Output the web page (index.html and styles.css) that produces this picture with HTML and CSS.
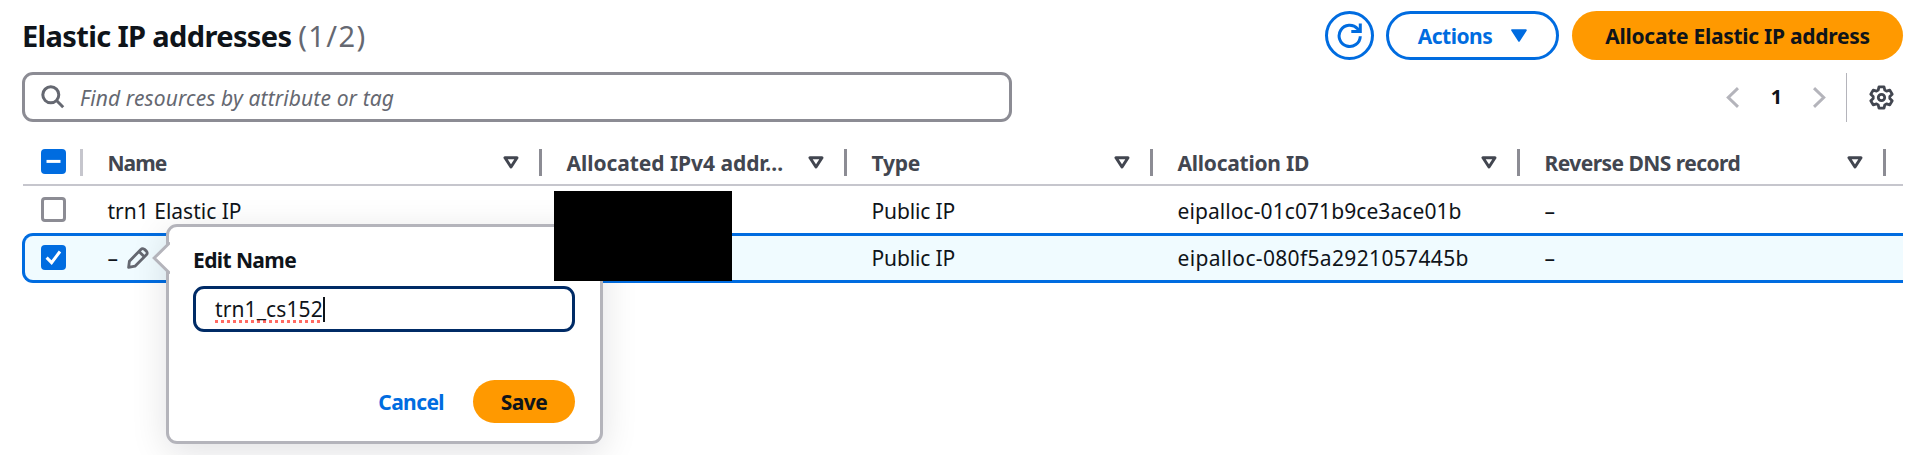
FILE: index.html
```html
<!DOCTYPE html>
<html lang="en">
<head><meta charset="utf-8"><title>Elastic IP addresses</title><link rel="stylesheet" href="styles.css"></head>
<body>
<main class="panel">
  <header class="header">
    <h1 class="title">Elastic IP addresses <span class="count">(1/2)</span></h1>
    <div class="actions">
      <button class="btn btn-icon" aria-label="Refresh"><svg width="27" height="27" viewBox="0 0 27 27" fill="none" stroke="currentColor" stroke-width="3"><path d="M24.3 14.2A10.6 10.6 0 1 1 21.6 6.8l2 2.2"/><path d="M24.3 1.5v8h-9"/></svg></button>
      <button class="btn btn-normal">Actions<svg width="16" height="13" viewBox="0 0 16 13" fill="currentColor" stroke="currentColor" stroke-width="2" stroke-linejoin="round"><path d="M1.2 1.2h13.6L8 11.8z"/></svg></button>
      <button class="btn btn-primary">Allocate Elastic IP address</button>
    </div>
  </header>
  <div class="tools">
    <div class="search">
      <svg width="24" height="24" viewBox="0 0 24 24" fill="none" stroke="#656871" stroke-width="3"><circle cx="9.8" cy="9.8" r="8"/><path d="M15.3 15.3l6.9 6.9"/></svg>
      <span class="placeholder">Find resources by attribute or tag</span>
    </div>
    <div class="pager">
      <svg width="13" height="21" viewBox="0 0 13 21" fill="none" stroke="#b4b4bb" stroke-width="3"><path d="M12 1.2L2.3 10.5 12 19.8"/></svg>
      <b class="page">1</b>
      <svg width="13" height="21" viewBox="0 0 13 21" fill="none" stroke="#b4b4bb" stroke-width="3"><path d="M1 1.2l9.7 9.3L1 19.8"/></svg>
      <span class="rule"></span>
      <svg width="25" height="25" viewBox="0 0 25 25" fill="none" stroke="#424650" stroke-width="2.8" stroke-linejoin="round"><path d="M10 1.8h5l.8 3.3 1.7 1 3.3-1 2.4 4.2-2.4 2.3v1.8l2.4 2.3-2.4 4.2-3.3-1-1.7 1-.8 3.3h-5l-.8-3.3-1.7-1-3.3 1-2.4-4.2 2.4-2.3v-1.8L1.8 9.3l2.4-4.2 3.3 1 1.7-1z"/><circle cx="12.5" cy="12.5" r="3.2"/></svg>
    </div>
  </div>
  <section class="table">
    <div class="row head">
      <div class="cell check light"><span class="box on"><svg width="25" height="25" viewBox="0 0 25 25"><path d="M5.5 12.4h14" stroke="#fff" stroke-width="3"/></svg></span></div>
      <div class="cell"><span class="h-name">Name</span><svg class="sort" width="16" height="13" viewBox="0 0 16 13"><path d="M2 1.8h12L8 11z"/></svg></div>
      <div class="cell"><span class="h-ip">Allocated IPv4 addr…</span><svg class="sort" width="16" height="13" viewBox="0 0 16 13"><path d="M2 1.8h12L8 11z"/></svg></div>
      <div class="cell"><span class="h-type">Type</span><svg class="sort" width="16" height="13" viewBox="0 0 16 13"><path d="M2 1.8h12L8 11z"/></svg></div>
      <div class="cell"><span class="h-id">Allocation ID</span><svg class="sort" width="16" height="13" viewBox="0 0 16 13"><path d="M2 1.8h12L8 11z"/></svg></div>
      <div class="cell"><span class="h-dns">Reverse DNS record</span><svg class="sort" width="16" height="13" viewBox="0 0 16 13"><path d="M2 1.8h12L8 11z"/></svg></div>
    </div>
    <div class="row first">
      <div class="cell check"><span class="box"></span></div>
      <div class="cell">trn1 Elastic IP</div>
      <div class="cell"></div>
      <div class="cell type">Public IP</div>
      <div class="cell id-a">eipalloc-01c071b9ce3ace01b</div>
      <div class="cell">–</div>
    </div>
    <div class="row selected">
      <div class="cell check"><span class="box on"><svg width="25" height="25" viewBox="0 0 25 25"><path d="M5.6 12.6l5 5L19 6.5" fill="none" stroke="#fff" stroke-width="3"/></svg></span></div>
      <div class="cell edit">–<svg width="22" height="22" viewBox="0 0 22 22" fill="none" stroke="#656871" stroke-width="2.8" stroke-linejoin="round"><path d="M1.6 20.4l.8-6.2L13.6 2.7q1.7-1.7 3.6-.6l2.2 2q1.6 1.9 0 3.7L8 19.2z"/><path d="M12 4.6l5.4 5.2"/></svg>
        <div class="popover">
          <svg class="arrow" width="18" height="32" viewBox="0 0 18 32"><path d="M18 .5L2.2 16 18 31.5" fill="#fff" stroke="#b4b4bb" stroke-width="3"/></svg>
          <label class="label">Edit Name</label>
          <div class="input"><span class="value">trn1_cs152</span><span class="caret"></span></div>
          <div class="foot"><button class="link">Cancel</button><button class="save">Save</button></div>
        </div>
      </div>
      <div class="cell"><span class="redaction"></span></div>
      <div class="cell type">Public IP</div>
      <div class="cell id-b">eipalloc-080f5a2921057445b</div>
      <div class="cell">–</div>
    </div>
  </section>
</main>
</body>
</html>
```
FILE: styles.css
```css
* { box-sizing: border-box; }
body { margin: 0; height: 455px; overflow: hidden; background: #fff; color: #0f141a; font: 21px/28px "Noto Sans", "Open Sans", sans-serif; }
svg { display: block; flex: none; }
button { font: inherit; color: inherit; border: 0; padding: 0; background: none; white-space: nowrap; }
.panel { padding: 11px 17px 0 22px; }
.header { display: flex; justify-content: space-between; height: 49px; }
.title { margin: 0; padding-top: 1px; font-size: 29px; line-height: 48px; font-weight: 700; letter-spacing: -.64px; }
.count { color: #656871; font-weight: 400; letter-spacing: 1.4px; }
.actions { display: flex; gap: 12px; }
.btn { height: 49px; border-radius: 25px; display: flex; align-items: center; justify-content: center; font-weight: 700; }
.btn-icon { width: 49px; border: 3px solid #006ce0; color: #006ce0; }
.btn-normal { width: 173px; border: 3px solid #006ce0; color: #006ce0; gap: 19px; letter-spacing: -.5px; }
.btn-primary { width: 331px; margin-left: 1px; background: #ff9900; letter-spacing: -.28px; }
.tools { display: flex; justify-content: space-between; margin-top: 12px; height: 50px; }
.search { width: 990px; border: 3px solid #8c8c94; border-radius: 11px; display: flex; align-items: center; padding-left: 16px; gap: 15px; }
.placeholder { color: #656871; font-style: italic; letter-spacing: .13px; padding-top: 1px; }
.pager { display: flex; align-items: center; padding-right: 9px; }
.page { width: 74px; text-align: center; font-weight: 700; font-size: 20px; padding-left: 1px; }
.rule { width: 1px; height: 49px; background: #b4b4bb; margin: 0 22px 0 20px; }
.table { margin-top: 12px; }
.row { display: grid; grid-template-columns: 61px 459px 305px 306px 367px 366px 1fr; }
.cell { display: flex; align-items: center; padding-left: 24.5px; white-space: nowrap; min-width: 0; }
.check { padding-left: 19px; }
.head { height: 52px; padding-top: 8px; align-items: center; margin-left: 1px; border-bottom: 2px solid #c6c6cd; color: #424650; font-weight: 700; grid-template-columns: 60px 459px 305px 306px 367px 366px 1fr; }
.head .cell { height: 27px; margin-bottom: 1px; justify-content: space-between; padding-right: 20px; border-right: 3px solid #8c8c94; }
.head .check { padding: 0 0 2px 18px; }
.head .light { border-color: #c6c6cd; }
.sort { fill: none; stroke: #424650; stroke-width: 3; stroke-linejoin: round; }
.h-name { letter-spacing: -1px; }
.h-ip { letter-spacing: -.05px; }
.h-id { letter-spacing: -.25px; }
.h-type { letter-spacing: -.2px; }
.h-dns { letter-spacing: -.55px; }
.box { width: 25px; height: 25px; border: 3px solid #8c8c94; border-radius: 4px; background: #fff; display: block; }
.box.on { border: 0; background: #006ce0; }
.first { height: 48px; }
.first .cell { padding-top: 1px; }
.row .check { padding-bottom: 2px; }
.type { letter-spacing: -.15px; }
.id-a { letter-spacing: .08px; }
.id-b { letter-spacing: .34px; }
.selected { height: 50px; margin-top: -1px; border: 3px solid #006ce0; border-right: 0; border-radius: 11px 0 0 11px; background: #f0fbff; grid-template-columns: 58px 459px 305px 306px 367px 366px 1fr; }
.selected .check { padding-left: 16px; }
.selected .cell { position: relative; }
.edit { gap: 9px; }
.popover { position: absolute; z-index: 2; left: 83px; top: -12px; width: 437px; height: 220px; border: 3px solid #b4b4bb; border-radius: 11px; background: #fff; padding: 18px 25px 0 24px; box-shadow: 0 8px 36px rgba(0, 7, 22, .12); }
.arrow { position: absolute; left: -17px; top: 15px; }
.label { display: block; font-weight: 700; letter-spacing: -.6px; line-height: 30px; }
.input { display: flex; align-items: center; height: 46px; margin-top: 11px; border: 3px solid #002b66; border-radius: 11px; padding-left: 19px; }
.value { letter-spacing: .1px; text-decoration: underline dotted #ff6b63 3px; text-underline-offset: 3px; text-decoration-skip-ink: none; }
.caret { width: 2px; height: 25px; background: #0f141a; }
.foot { display: flex; justify-content: flex-end; align-items: center; gap: 29px; margin-top: 48px; }
.link { color: #006ce0; font-weight: 700; letter-spacing: -.6px; }
.save { width: 102px; height: 43px; border-radius: 22px; background: #ff9900; font-weight: 700; letter-spacing: -.5px; }
.redaction { position: absolute; z-index: 3; left: 12px; top: -45px; width: 178px; height: 90px; background: #000; }
```
